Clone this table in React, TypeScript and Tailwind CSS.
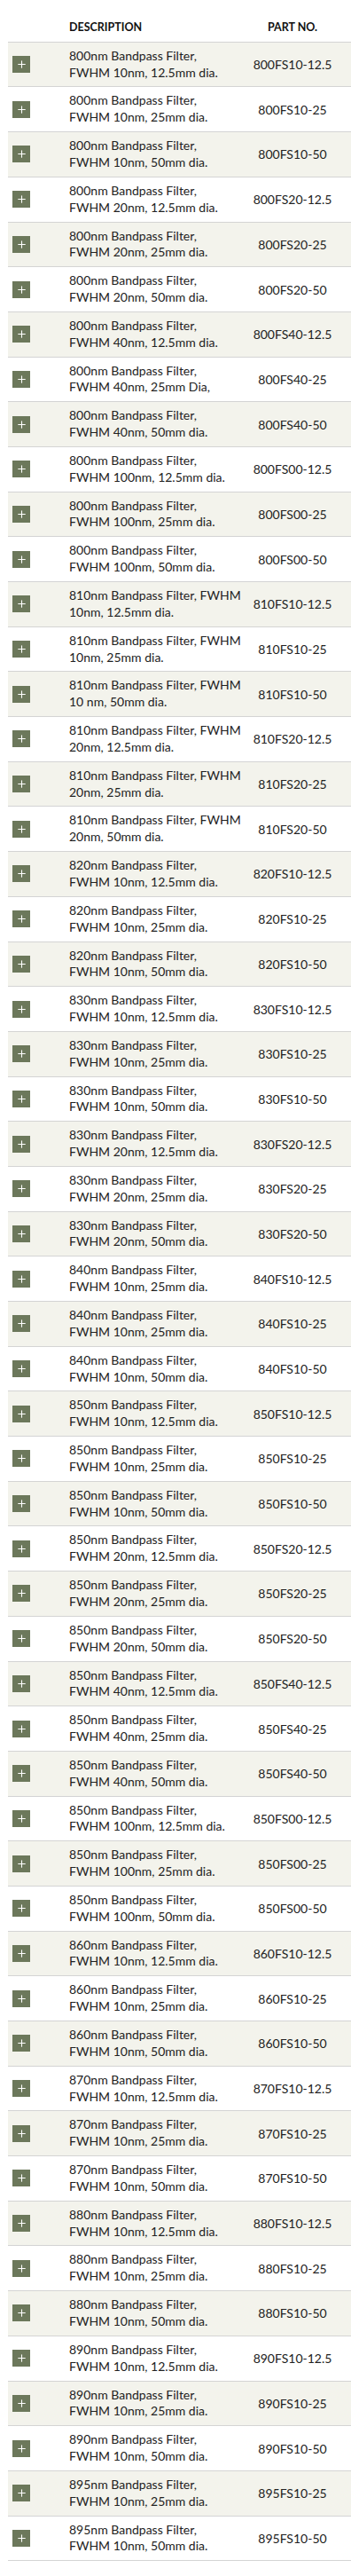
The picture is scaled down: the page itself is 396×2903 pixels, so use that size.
import { Plus } from 'lucide-react';

type Row = { line1: string; line2: string; part: string };

// descriptions are kept as two lines, exactly as they wrap on the page
const rows: Row[] = [
  { line1: '800nm Bandpass Filter,', line2: 'FWHM 10nm, 12.5mm dia.', part: '800FS10-12.5' },
  { line1: '800nm Bandpass Filter,', line2: 'FWHM 10nm, 25mm dia.', part: '800FS10-25' },
  { line1: '800nm Bandpass Filter,', line2: 'FWHM 10nm, 50mm dia.', part: '800FS10-50' },
  { line1: '800nm Bandpass Filter,', line2: 'FWHM 20nm, 12.5mm dia.', part: '800FS20-12.5' },
  { line1: '800nm Bandpass Filter,', line2: 'FWHM 20nm, 25mm dia.', part: '800FS20-25' },
  { line1: '800nm Bandpass Filter,', line2: 'FWHM 20nm, 50mm dia.', part: '800FS20-50' },
  { line1: '800nm Bandpass Filter,', line2: 'FWHM 40nm, 12.5mm dia.', part: '800FS40-12.5' },
  { line1: '800nm Bandpass Filter,', line2: 'FWHM 40nm, 25mm Dia,', part: '800FS40-25' },
  { line1: '800nm Bandpass Filter,', line2: 'FWHM 40nm, 50mm dia.', part: '800FS40-50' },
  { line1: '800nm Bandpass Filter,', line2: 'FWHM 100nm, 12.5mm dia.', part: '800FS00-12.5' },
  { line1: '800nm Bandpass Filter,', line2: 'FWHM 100nm, 25mm dia.', part: '800FS00-25' },
  { line1: '800nm Bandpass Filter,', line2: 'FWHM 100nm, 50mm dia.', part: '800FS00-50' },
  { line1: '810nm Bandpass Filter, FWHM', line2: '10nm, 12.5mm dia.', part: '810FS10-12.5' },
  { line1: '810nm Bandpass Filter, FWHM', line2: '10nm, 25mm dia.', part: '810FS10-25' },
  { line1: '810nm Bandpass Filter, FWHM', line2: '10 nm, 50mm dia.', part: '810FS10-50' },
  { line1: '810nm Bandpass Filter, FWHM', line2: '20nm, 12.5mm dia.', part: '810FS20-12.5' },
  { line1: '810nm Bandpass Filter, FWHM', line2: '20nm, 25mm dia.', part: '810FS20-25' },
  { line1: '810nm Bandpass Filter, FWHM', line2: '20nm, 50mm dia.', part: '810FS20-50' },
  { line1: '820nm Bandpass Filter,', line2: 'FWHM 10nm, 12.5mm dia.', part: '820FS10-12.5' },
  { line1: '820nm Bandpass Filter,', line2: 'FWHM 10nm, 25mm dia.', part: '820FS10-25' },
  { line1: '820nm Bandpass Filter,', line2: 'FWHM 10nm, 50mm dia.', part: '820FS10-50' },
  { line1: '830nm Bandpass Filter,', line2: 'FWHM 10nm, 12.5mm dia.', part: '830FS10-12.5' },
  { line1: '830nm Bandpass Filter,', line2: 'FWHM 10nm, 25mm dia.', part: '830FS10-25' },
  { line1: '830nm Bandpass Filter,', line2: 'FWHM 10nm, 50mm dia.', part: '830FS10-50' },
  { line1: '830nm Bandpass Filter,', line2: 'FWHM 20nm, 12.5mm dia.', part: '830FS20-12.5' },
  { line1: '830nm Bandpass Filter,', line2: 'FWHM 20nm, 25mm dia.', part: '830FS20-25' },
  { line1: '830nm Bandpass Filter,', line2: 'FWHM 20nm, 50mm dia.', part: '830FS20-50' },
  { line1: '840nm Bandpass Filter,', line2: 'FWHM 10nm, 25mm dia.', part: '840FS10-12.5' },
  { line1: '840nm Bandpass Filter,', line2: 'FWHM 10nm, 25mm dia.', part: '840FS10-25' },
  { line1: '840nm Bandpass Filter,', line2: 'FWHM 10nm, 50mm dia.', part: '840FS10-50' },
  { line1: '850nm Bandpass Filter,', line2: 'FWHM 10nm, 12.5mm dia.', part: '850FS10-12.5' },
  { line1: '850nm Bandpass Filter,', line2: 'FWHM 10nm, 25mm dia.', part: '850FS10-25' },
  { line1: '850nm Bandpass Filter,', line2: 'FWHM 10nm, 50mm dia.', part: '850FS10-50' },
  { line1: '850nm Bandpass Filter,', line2: 'FWHM 20nm, 12.5mm dia.', part: '850FS20-12.5' },
  { line1: '850nm Bandpass Filter,', line2: 'FWHM 20nm, 25mm dia.', part: '850FS20-25' },
  { line1: '850nm Bandpass Filter,', line2: 'FWHM 20nm, 50mm dia.', part: '850FS20-50' },
  { line1: '850nm Bandpass Filter,', line2: 'FWHM 40nm, 12.5mm dia.', part: '850FS40-12.5' },
  { line1: '850nm Bandpass Filter,', line2: 'FWHM 40nm, 25mm dia.', part: '850FS40-25' },
  { line1: '850nm Bandpass Filter,', line2: 'FWHM 40nm, 50mm dia.', part: '850FS40-50' },
  { line1: '850nm Bandpass Filter,', line2: 'FWHM 100nm, 12.5mm dia.', part: '850FS00-12.5' },
  { line1: '850nm Bandpass Filter,', line2: 'FWHM 100nm, 25mm dia.', part: '850FS00-25' },
  { line1: '850nm Bandpass Filter,', line2: 'FWHM 100nm, 50mm dia.', part: '850FS00-50' },
  { line1: '860nm Bandpass Filter,', line2: 'FWHM 10nm, 12.5mm dia.', part: '860FS10-12.5' },
  { line1: '860nm Bandpass Filter,', line2: 'FWHM 10nm, 25mm dia.', part: '860FS10-25' },
  { line1: '860nm Bandpass Filter,', line2: 'FWHM 10nm, 50mm dia.', part: '860FS10-50' },
  { line1: '870nm Bandpass Filter,', line2: 'FWHM 10nm, 12.5mm dia.', part: '870FS10-12.5' },
  { line1: '870nm Bandpass Filter,', line2: 'FWHM 10nm, 25mm dia.', part: '870FS10-25' },
  { line1: '870nm Bandpass Filter,', line2: 'FWHM 10nm, 50mm dia.', part: '870FS10-50' },
  { line1: '880nm Bandpass Filter,', line2: 'FWHM 10nm, 12.5mm dia.', part: '880FS10-12.5' },
  { line1: '880nm Bandpass Filter,', line2: 'FWHM 10nm, 25mm dia.', part: '880FS10-25' },
  { line1: '880nm Bandpass Filter,', line2: 'FWHM 10nm, 50mm dia.', part: '880FS10-50' },
  { line1: '890nm Bandpass Filter,', line2: 'FWHM 10nm, 12.5mm dia.', part: '890FS10-12.5' },
  { line1: '890nm Bandpass Filter,', line2: 'FWHM 10nm, 25mm dia.', part: '890FS10-25' },
  { line1: '890nm Bandpass Filter,', line2: 'FWHM 10nm, 50mm dia.', part: '890FS10-50' },
  { line1: '895nm Bandpass Filter,', line2: 'FWHM 10nm, 25mm dia.', part: '895FS10-25' },
  { line1: '895nm Bandpass Filter,', line2: 'FWHM 10nm, 50mm dia.', part: '895FS10-50' },
];

function ProductRow({ row, shaded }: { row: Row; shaded: boolean }) {
  return (
    <div
      className={`grid grid-cols-[69px_186px_132px] items-center border-b border-[#d4d4d4] py-1.5 ${
        shaded ? 'bg-[#f3f3ec]' : 'bg-white'
      }`}
    >
      <div className="pl-[5px]">
        <button className="flex h-[19px] w-5 items-center justify-center bg-[#6c785b] text-white">
          <Plus size={13} strokeWidth={2} />
        </button>
      </div>
      <div className="whitespace-nowrap text-[14px] leading-[18.84px] text-[#222]">
        <div>{row.line1}</div>
        <div>{row.line2}</div>
      </div>
      <div className="whitespace-nowrap text-center text-[14px] text-[#222]">{row.part}</div>
    </div>
  );
}

export default function App() {
  return (
    <div className="min-h-screen bg-white pl-[9px] pt-[22px] font-['Lato',sans-serif]">
      <div className="grid grid-cols-[69px_186px_132px] items-center border-b border-[#d4d4d4] pb-[6px] text-[12.5px] font-bold text-[#111]">
        <div />
        <div>DESCRIPTION</div>
        <div className="text-center">PART NO.</div>
      </div>
      {rows.map((row, i) => (
        <ProductRow key={row.part} row={row} shaded={i % 2 === 0} />
      ))}
    </div>
  );
}
